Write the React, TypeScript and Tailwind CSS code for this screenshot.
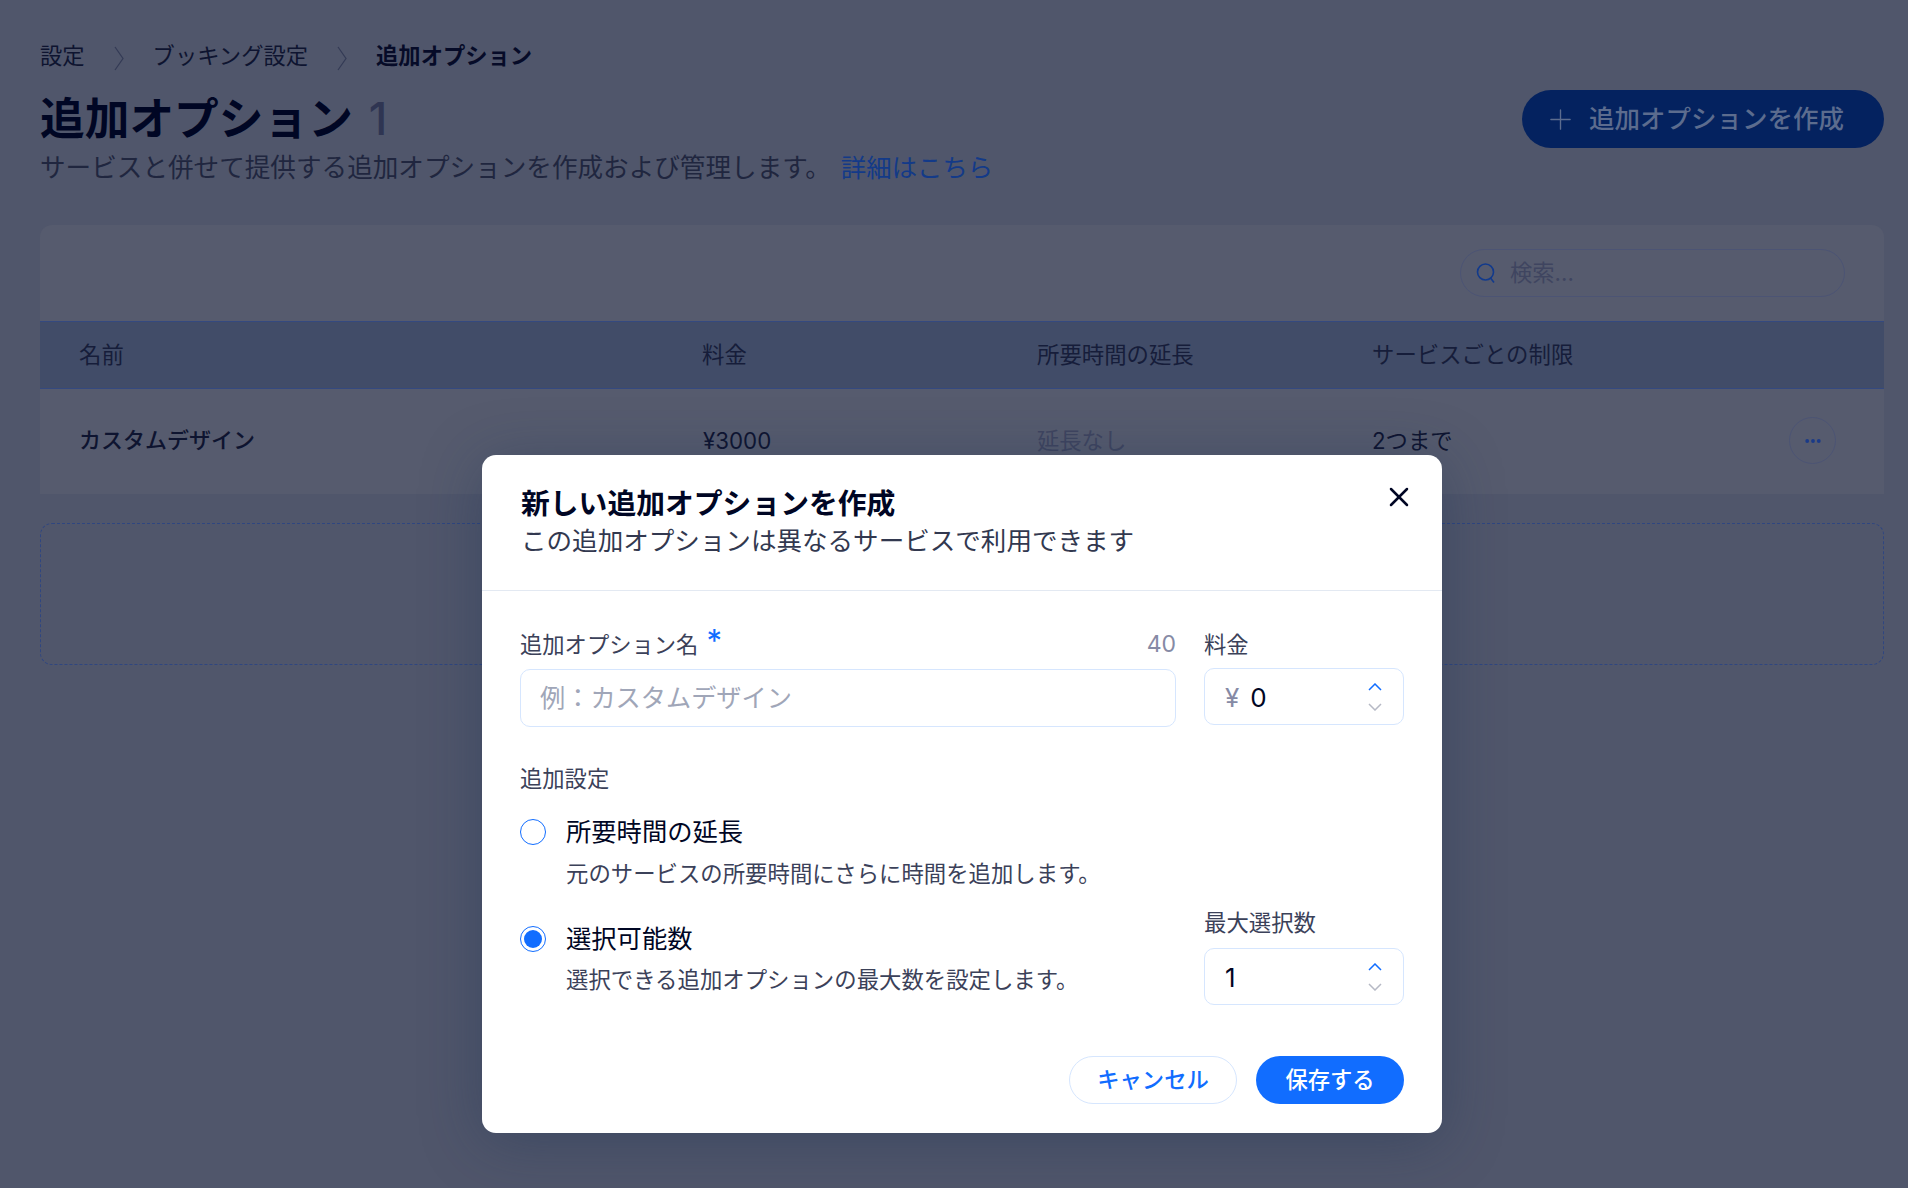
import React from 'react';
import { Plus, X } from 'lucide-react';

const Crumb = () => (
  <svg width="10" height="25" viewBox="0 0 10 25" fill="none" className="mt-1 text-[#333a55]">
    <path d="M1 1l8 11.5L1 24" stroke="currentColor" strokeWidth="1.2" />
  </svg>
);

const Stepper = () => (
  <div className="flex flex-col gap-[12px] items-center">
    <svg width="14" height="8" viewBox="0 0 14 8" fill="none">
      <path d="M1 7l6-6 6 6" stroke="#116dff" strokeWidth="1.5" />
    </svg>
    <svg width="14" height="8" viewBox="0 0 14 8" fill="none">
      <path d="M1 1l6 6 6-6" stroke="#b6b9c5" strokeWidth="1.5" />
    </svg>
  </div>
);

const NumberField = ({ prefix, value }: { prefix?: string; value: string }) => (
  <div className="w-[200px] h-[57px] rounded-[10px] border border-[#d6e6fe] flex items-center pl-[20px] pr-[21px]">
    {prefix && <span className="text-[26px] text-[#868aa5] mr-[11px] pt-[2px]">{prefix}</span>}
    <span className="text-[26px] text-[#000624] flex-1 pt-[2px]">{value}</span>
    <Stepper />
  </div>
);

export default function App() {
  return (
    <div className="relative min-h-[1188px] bg-[#50566b] pl-10 pr-6 pt-[42px] overflow-hidden font-[family-name:Inter,'Noto_Sans_CJK_JP',sans-serif]">
      {/* 背景ページ */}
      <div className="flex items-center gap-[29px] h-7 text-[22.3px] leading-7 text-[#0e1430]">
        <span>設定</span>
        <Crumb />
        <span>ブッキング設定</span>
        <Crumb />
        <span className="font-semibold text-[#060b28]">追加オプション</span>
      </div>

      <div className="flex justify-between mt-[20px]">
        <div>
          <h1 className="h-[60px] flex items-center gap-[16px] text-[44.7px] font-bold text-[#000624]">
            追加オプション
            <span className="font-medium text-[#2f3552]">1</span>
          </h1>
          <p className="mt-[1px] text-[25.6px] leading-[34px] text-[#20263f]">
            サービスと併せて提供する追加オプションを作成および管理します。
            <span className="ml-[10px] text-[25.4px] text-[#133a88]">詳細はこちら</span>
          </p>
        </div>
        <button className="w-[362px] h-[58px] rounded-full bg-[#04225f] text-[#5c6c8e] flex items-center pl-[22px] gap-[12px] text-[25.5px] font-medium">
          <Plus size={33} strokeWidth={1} />
          <span>追加オプションを作成</span>
        </button>
      </div>

      <div className="mt-[40px] rounded-t-xl bg-[#565b6e]">
        <div className="h-[96px] flex items-center justify-end pr-[39px]">
          <div className="w-[385px] h-[48px] rounded-full border border-[#4c5474] flex items-center pl-[15px] gap-[14px]">
            <svg width="20" height="22" viewBox="0 0 20 22" fill="none">
              <circle cx="9.5" cy="10" r="8" stroke="#123a8c" strokeWidth="1.6" />
              <path d="M14.5 16l3.5 4.5" stroke="#123a8c" strokeWidth="1.6" />
            </svg>
            <span className="text-[22.3px] text-[#3f4560]">検索...</span>
          </div>
        </div>
        <div className="h-[68px] grid grid-cols-[623px_335px_335px_1fr] items-center pl-[39px] bg-[#414c68] border-y border-[#34497f] text-[22.4px] text-[#161d3a]">
          <span>名前</span>
          <span>料金</span>
          <span>所要時間の延長</span>
          <span>サービスごとの制限</span>
        </div>
        <div className="h-[105px] pb-[2px] grid grid-cols-[623px_335px_335px_1fr] items-center pl-[39px] text-[22.3px] text-[#0e1430]">
          <span className="font-medium text-[22px]">カスタムデザイン</span>
          <span className="pl-[1px]">¥3000</span>
          <span className="text-[#3f4560]">延長なし</span>
          <div className="flex items-center justify-between pr-[48px]">
            <span>2つまで</span>
            <div className="w-[47px] h-[47px] rounded-full border border-[#4c5474] flex items-center justify-center">
              <svg width="16" height="4" viewBox="0 0 16 4" fill="#1a3a88">
                <circle cx="2.2" cy="2" r="1.9" />
                <circle cx="8" cy="2" r="1.9" />
                <circle cx="13.8" cy="2" r="1.9" />
              </svg>
            </div>
          </div>
        </div>
      </div>

      <div className="mt-[29px] h-[142px] rounded-xl border border-dashed border-[#2f4680]" />

      {/* モーダル */}
      <div className="absolute left-[482px] top-[455px] w-[960px] h-[678px] rounded-[14px] bg-white shadow-[0_8px_60px_rgba(22,45,80,0.35)] flex flex-col">
        <div className="relative h-[136px] border-b border-[#e3e9f2] px-[39px] pt-[31px]">
          <h2 className="text-[28.8px] leading-[36px] font-bold text-[#000624]">新しい追加オプションを作成</h2>
          <p className="text-[25.55px] leading-[38px] text-[#32384f]">
            この追加オプションは異なるサービスで利用できます
          </p>
          <button className="absolute right-[27px] top-[26px] text-[#000624]">
            <X size={32} strokeWidth={1.9} />
          </button>
        </div>

        <div className="px-[38px] flex-1 flex flex-col">
          <div className="flex gap-[28px] mt-[35px]">
            <div className="w-[656px]">
              <div className="h-[36px] pt-[1px] flex items-center text-[22.3px] text-[#3b4159]">
                <span>追加オプション名</span>
                <span className="ml-[8px] -mt-[8px] text-[31px] leading-none text-[#116dff]">*</span>
                <span className="ml-auto text-[#868aa5] text-[23px]">40</span>
              </div>
              <div className="mt-[7px] h-[58px] rounded-[10px] border border-[#d6e6fe] flex items-center pl-[19px] pt-[2px] text-[25.2px] text-[#a0a6b8]">
                例：カスタムデザイン
              </div>
            </div>
            <div className="w-[200px]">
              <div className="h-[36px] pt-[1px] flex items-center text-[22.3px] text-[#3b4159]">料金</div>
              <div className="mt-[6px]">
                <NumberField prefix="¥" value="0" />
              </div>
            </div>
          </div>

          <div className="mt-[34px] text-[22.3px] leading-[36px] text-[#3b4159]">追加設定</div>

          <div className="mt-[16px] flex items-center gap-[20px]">
            <div className="w-[26px] h-[26px] rounded-full border border-[#116dff]" />
            <span className="text-[25.3px] leading-[38px] text-[#000624]">所要時間の延長</span>
          </div>
          <p className="ml-[46px] mt-[5px] text-[22.4px] leading-[36px] text-[#3b4159]">
            元のサービスの所要時間にさらに時間を追加します。
          </p>

          <div className="flex justify-between">
            <div>
              <div className="mt-[28px] flex items-center gap-[20px]">
                <div className="w-[26px] h-[26px] rounded-full border border-[#116dff] flex items-center justify-center">
                  <div className="w-[18px] h-[18px] rounded-full bg-[#116dff]" />
                </div>
                <span className="text-[25.3px] leading-[38px] text-[#000624]">選択可能数</span>
              </div>
              <p className="ml-[46px] mt-[4px] text-[22.4px] leading-[36px] text-[#3b4159]">
                選択できる追加オプションの最大数を設定します。
              </p>
            </div>
            <div className="w-[200px]">
              <div className="h-[36px] mt-[13px] flex items-center text-[22.4px] text-[#3b4159]">最大選択数</div>
              <div className="mt-[7px]">
                <NumberField value="1" />
              </div>
            </div>
          </div>

          <div className="mt-[51px] flex justify-end gap-[19px] text-[22.3px] font-medium">
            <button className="w-[168px] h-[48px] rounded-full border border-[#d6e6fe] text-[#116dff]">キャンセル</button>
            <button className="w-[148px] h-[48px] rounded-full bg-[#116dff] text-white">保存する</button>
          </div>
        </div>
      </div>
    </div>
  );
}
